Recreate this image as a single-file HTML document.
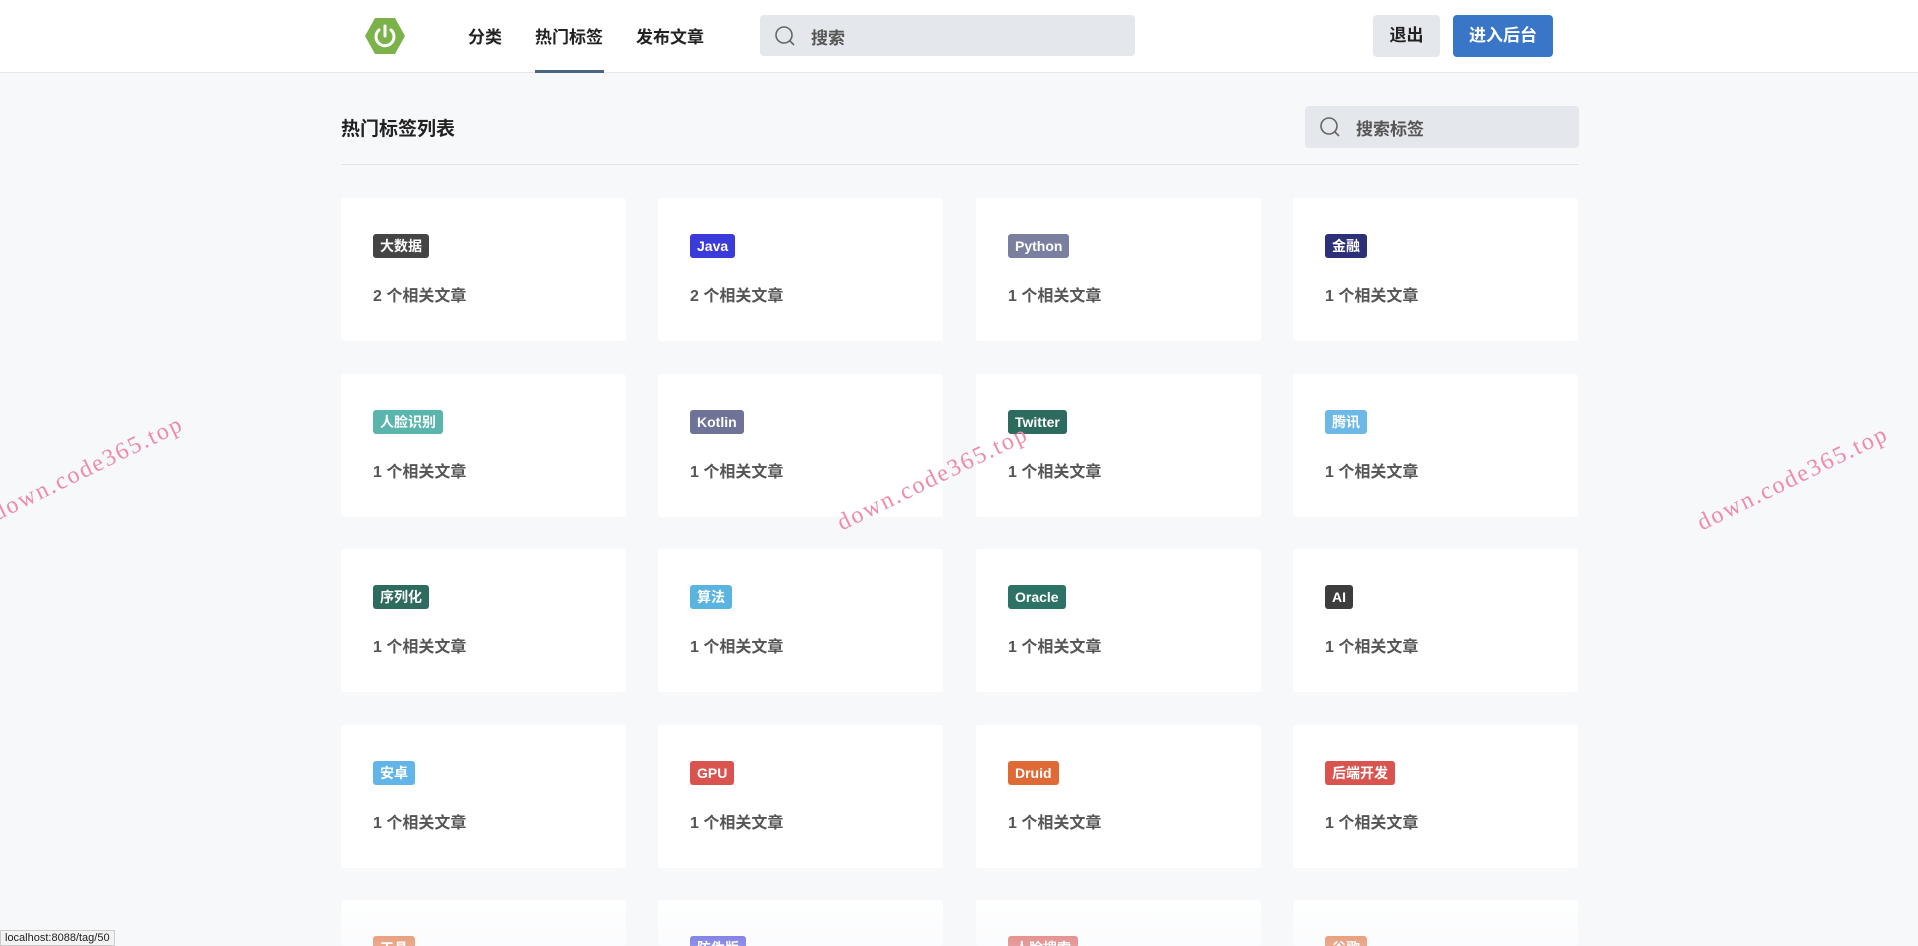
<!DOCTYPE html>
<html><head><meta charset="utf-8"><style>
*{margin:0;padding:0;box-sizing:border-box}
html{width:1918px;height:946px;overflow:hidden}
body{width:1918px;height:946px;overflow:hidden;background:#f6f8fa;font-family:"Liberation Sans","Noto Sans CJK SC",sans-serif;position:relative}
.hdr{position:absolute;left:0;top:0;width:1918px;height:73px;background:#fff;border-bottom:1px solid #e6e9ec}
.abs{position:absolute}
.nav{font-size:17px;color:#222;top:23px;font-weight:bold}
.search{left:760px;top:15px;width:375px;height:41px;background:#e4e7eb;border-radius:4px}
.search span{position:absolute;left:51px;top:9px;font-size:17px;color:#555;font-weight:bold}
.btn{top:15px;height:42px;border-radius:4px;font-size:17px;line-height:42px;text-align:center;font-weight:bold}
.title{left:341px;top:114px;font-size:19px;font-weight:bold;color:#222}
.card{position:absolute;width:285px;height:143px;background:#fff;border-radius:3px;overflow:hidden}
.tag{position:absolute;left:32px;top:36px;height:24px;line-height:24px;padding:0 7px;border-radius:3px;color:#fff;font-size:14px;font-weight:bold}
.cnt{position:absolute;left:32px;top:84px;font-size:16px;color:#555;font-weight:bold}
.wm{position:absolute;color:#f08aa8;font-family:"Liberation Serif",serif;font-size:24px;letter-spacing:2px;transform:rotate(-26deg);transform-origin:left bottom;white-space:nowrap}
.fade{position:absolute;left:0;top:880px;width:1918px;height:66px;background:linear-gradient(rgba(246,248,250,0),rgba(246,248,250,.45))}
</style></head><body>
<div class="hdr">
<svg class="abs" style="left:365px;top:16px" width="40" height="40" viewBox="0 0 40 40"><polygon points="10,2 30,2 40,20 30,38 10,38 0,20" fill="#7bb24a"/><path d="M14 14 A9 9 0 1 0 26 14" fill="none" stroke="#fff" stroke-width="3" stroke-linecap="round"/><line x1="20" y1="10" x2="20" y2="20" stroke="#fff" stroke-width="3" stroke-linecap="round"/></svg>
<div class="abs nav" style="left:468px">分类</div>
<div class="abs nav" style="left:535px">热门标签</div>
<div class="abs" style="left:535px;top:70px;width:69px;height:3px;background:#4a6580"></div>
<div class="abs nav" style="left:636px">发布文章</div>
<div class="abs search"><svg class="abs" style="left:14px;top:10px" width="22" height="22" viewBox="0 0 22 22"><circle cx="10" cy="10" r="8" fill="none" stroke="#666" stroke-width="1.6"/><line x1="15.5" y1="15.5" x2="20" y2="20" stroke="#666" stroke-width="1.6"/></svg><span>搜索</span></div>
<div class="abs btn" style="left:1373px;width:67px;background:#e4e7eb;color:#222">退出</div>
<div class="abs btn" style="left:1453px;width:100px;background:#3a76c8;color:#fff">进入后台</div>
</div>
<div class="abs title">热门标签列表</div>
<div class="abs search" style="left:1305px;top:106px;width:274px;height:42px"><svg class="abs" style="left:14px;top:10px" width="22" height="22" viewBox="0 0 22 22"><circle cx="10" cy="10" r="8" fill="none" stroke="#666" stroke-width="1.6"/><line x1="15.5" y1="15.5" x2="20" y2="20" stroke="#666" stroke-width="1.6"/></svg><span>搜索标签</span></div>
<div class="abs" style="left:341px;top:164px;width:1238px;height:1px;background:#e3e6e9"></div>

<div class="card" style="left:341px;top:198px"><div class="tag" style="background:#444">大数据</div><div class="cnt">2 个相关文章</div></div>
<div class="card" style="left:658px;top:198px"><div class="tag" style="background:#3b3bd9">Java</div><div class="cnt">2 个相关文章</div></div>
<div class="card" style="left:976px;top:198px"><div class="tag" style="background:#7a7fa0">Python</div><div class="cnt">1 个相关文章</div></div>
<div class="card" style="left:1293px;top:198px"><div class="tag" style="background:#2b3078">金融</div><div class="cnt">1 个相关文章</div></div>

<div class="card" style="left:341px;top:374px"><div class="tag" style="background:#5ab5ad">人脸识别</div><div class="cnt">1 个相关文章</div></div>
<div class="card" style="left:658px;top:374px"><div class="tag" style="background:#6f7398">Kotlin</div><div class="cnt">1 个相关文章</div></div>
<div class="card" style="left:976px;top:374px"><div class="tag" style="background:#2d6b5e">Twitter</div><div class="cnt">1 个相关文章</div></div>
<div class="card" style="left:1293px;top:374px"><div class="tag" style="background:#6cb8e6">腾讯</div><div class="cnt">1 个相关文章</div></div>

<div class="card" style="left:341px;top:549px"><div class="tag" style="background:#2d6b5e">序列化</div><div class="cnt">1 个相关文章</div></div>
<div class="card" style="left:658px;top:549px"><div class="tag" style="background:#5ab4e0">算法</div><div class="cnt">1 个相关文章</div></div>
<div class="card" style="left:976px;top:549px"><div class="tag" style="background:#2d7365">Oracle</div><div class="cnt">1 个相关文章</div></div>
<div class="card" style="left:1293px;top:549px"><div class="tag" style="background:#3d3d3d">AI</div><div class="cnt">1 个相关文章</div></div>

<div class="card" style="left:341px;top:725px"><div class="tag" style="background:#62b5e8">安卓</div><div class="cnt">1 个相关文章</div></div>
<div class="card" style="left:658px;top:725px"><div class="tag" style="background:#d9534f">GPU</div><div class="cnt">1 个相关文章</div></div>
<div class="card" style="left:976px;top:725px"><div class="tag" style="background:#e06a35">Druid</div><div class="cnt">1 个相关文章</div></div>
<div class="card" style="left:1293px;top:725px"><div class="tag" style="background:#d9534f">后端开发</div><div class="cnt">1 个相关文章</div></div>

<div class="card" style="left:341px;top:900px;height:46px"><div class="tag" style="background:#e06a35">工具</div></div>
<div class="card" style="left:658px;top:900px;height:46px"><div class="tag" style="background:#3b3bd9">防伪版</div></div>
<div class="card" style="left:976px;top:900px;height:46px"><div class="tag" style="background:#d9534f">人脸搜索</div></div>
<div class="card" style="left:1293px;top:900px;height:46px"><div class="tag" style="background:#e06a35">谷歌</div></div>
<div class="fade"></div>

<div class="wm" style="left:0px;top:500px">down.code365.top</div>
<div class="wm" style="left:845px;top:510px">down.code365.top</div>
<div class="wm" style="left:1705px;top:510px">down.code365.top</div>

<div class="abs" style="left:0;top:930px;height:16px;padding:0 4px;background:#f3f3f3;border:1px solid #ccc;font-size:11px;line-height:14px;color:#222">localhost:8088/tag/50</div>
</body></html>
